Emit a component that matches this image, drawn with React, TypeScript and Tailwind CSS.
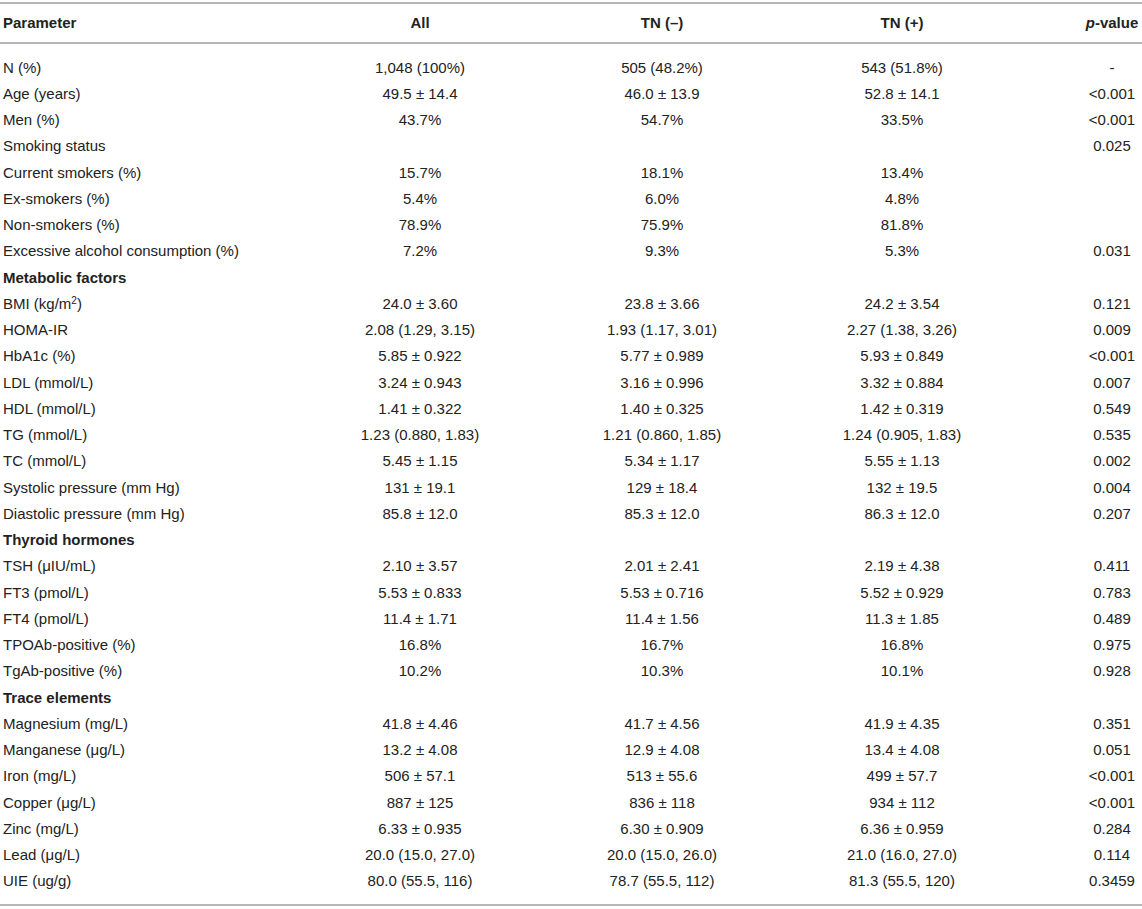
import type { ReactNode } from "react";

type Row = {
  label: ReactNode;
  all?: string;
  neg?: string;
  pos?: string;
  p?: string;
  section?: boolean;
};

const rows: Row[] = [
  { label: "N (%)", all: "1,048 (100%)", neg: "505 (48.2%)", pos: "543 (51.8%)", p: "-" },
  { label: "Age (years)", all: "49.5 ± 14.4", neg: "46.0 ± 13.9", pos: "52.8 ± 14.1", p: "<0.001" },
  { label: "Men (%)", all: "43.7%", neg: "54.7%", pos: "33.5%", p: "<0.001" },
  { label: "Smoking status", p: "0.025" },
  { label: "Current smokers (%)", all: "15.7%", neg: "18.1%", pos: "13.4%" },
  { label: "Ex-smokers (%)", all: "5.4%", neg: "6.0%", pos: "4.8%" },
  { label: "Non-smokers (%)", all: "78.9%", neg: "75.9%", pos: "81.8%" },
  { label: "Excessive alcohol consumption (%)", all: "7.2%", neg: "9.3%", pos: "5.3%", p: "0.031" },
  { label: "Metabolic factors", section: true },
  {
    label: (
      <>
        BMI (kg/m<sup className="text-[10px]">2</sup>)
      </>
    ),
    all: "24.0 ± 3.60", neg: "23.8 ± 3.66", pos: "24.2 ± 3.54", p: "0.121",
  },
  { label: "HOMA-IR", all: "2.08 (1.29, 3.15)", neg: "1.93 (1.17, 3.01)", pos: "2.27 (1.38, 3.26)", p: "0.009" },
  { label: "HbA1c (%)", all: "5.85 ± 0.922", neg: "5.77 ± 0.989", pos: "5.93 ± 0.849", p: "<0.001" },
  { label: "LDL (mmol/L)", all: "3.24 ± 0.943", neg: "3.16 ± 0.996", pos: "3.32 ± 0.884", p: "0.007" },
  { label: "HDL (mmol/L)", all: "1.41 ± 0.322", neg: "1.40 ± 0.325", pos: "1.42 ± 0.319", p: "0.549" },
  { label: "TG (mmol/L)", all: "1.23 (0.880, 1.83)", neg: "1.21 (0.860, 1.85)", pos: "1.24 (0.905, 1.83)", p: "0.535" },
  { label: "TC (mmol/L)", all: "5.45 ± 1.15", neg: "5.34 ± 1.17", pos: "5.55 ± 1.13", p: "0.002" },
  { label: "Systolic pressure (mm Hg)", all: "131 ± 19.1", neg: "129 ± 18.4", pos: "132 ± 19.5", p: "0.004" },
  { label: "Diastolic pressure (mm Hg)", all: "85.8 ± 12.0", neg: "85.3 ± 12.0", pos: "86.3 ± 12.0", p: "0.207" },
  { label: "Thyroid hormones", section: true },
  { label: "TSH (μIU/mL)", all: "2.10 ± 3.57", neg: "2.01 ± 2.41", pos: "2.19 ± 4.38", p: "0.411" },
  { label: "FT3 (pmol/L)", all: "5.53 ± 0.833", neg: "5.53 ± 0.716", pos: "5.52 ± 0.929", p: "0.783" },
  { label: "FT4 (pmol/L)", all: "11.4 ± 1.71", neg: "11.4 ± 1.56", pos: "11.3 ± 1.85", p: "0.489" },
  { label: "TPOAb-positive (%)", all: "16.8%", neg: "16.7%", pos: "16.8%", p: "0.975" },
  { label: "TgAb-positive (%)", all: "10.2%", neg: "10.3%", pos: "10.1%", p: "0.928" },
  { label: "Trace elements", section: true },
  { label: "Magnesium (mg/L)", all: "41.8 ± 4.46", neg: "41.7 ± 4.56", pos: "41.9 ± 4.35", p: "0.351" },
  { label: "Manganese (μg/L)", all: "13.2 ± 4.08", neg: "12.9 ± 4.08", pos: "13.4 ± 4.08", p: "0.051" },
  { label: "Iron (mg/L)", all: "506 ± 57.1", neg: "513 ± 55.6", pos: "499 ± 57.7", p: "<0.001" },
  { label: "Copper (μg/L)", all: "887 ± 125", neg: "836 ± 118", pos: "934 ± 112", p: "<0.001" },
  { label: "Zinc (mg/L)", all: "6.33 ± 0.935", neg: "6.30 ± 0.909", pos: "6.36 ± 0.959", p: "0.284" },
  { label: "Lead (μg/L)", all: "20.0 (15.0, 27.0)", neg: "20.0 (15.0, 26.0)", pos: "21.0 (16.0, 27.0)", p: "0.114" },
  { label: "UIE (ug/g)", all: "80.0 (55.5, 116)", neg: "78.7 (55.5, 112)", pos: "81.3 (55.5, 120)", p: "0.3459" },
];

const cols = "grid grid-cols-[300px_240px_244px_236px_1fr]";

export default function App() {
  return (
    <div className="w-[1142px] bg-white pt-[2px] text-[15px] text-[#222] font-['Liberation_Sans',Arial,sans-serif]">
      {/* header */}
      <div className={`${cols} h-[42px] items-center border-y-2 border-[#b5b5b5] font-bold`}>
        <div className="pl-[3px]">Parameter</div>
        <div className="text-center">All</div>
        <div className="text-center">TN (–)</div>
        <div className="text-center">TN (+)</div>
        <div className="text-center pl-[62px]">
          <span className="italic">p</span>-value
        </div>
      </div>

      {/* body */}
      <div className="py-[10px] border-b-2 border-[#b5b5b5]">
        {rows.map((r, i) => (
          <div key={i} className={`${cols} h-[26.25px] items-center leading-none`}>
            <div className={`pl-[3px] whitespace-nowrap ${r.section ? "font-bold" : ""}`}>{r.label}</div>
            <div className="text-center">{r.all}</div>
            <div className="text-center">{r.neg}</div>
            <div className="text-center">{r.pos}</div>
            <div className="text-center pl-[62px]">{r.p}</div>
          </div>
        ))}
      </div>
    </div>
  );
}
